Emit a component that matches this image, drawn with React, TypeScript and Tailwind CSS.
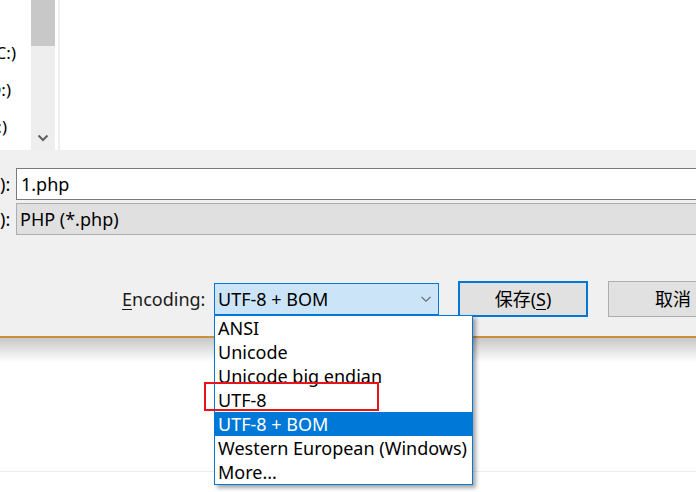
import React from "react";

const font = { fontFamily: '"Noto Sans", "Noto Sans CJK SC", sans-serif' };

const encodings = [
  "ANSI",
  "Unicode",
  "Unicode big endian",
  "UTF-8",
  "UTF-8 + BOM",
  "Western European (Windows)",
  "More...",
];

function NavList() {
  // drive labels are cut by the left edge of the window, as in the shot
  const drives = [
    { label: "本地磁盘 (C:)", pr: "pr-[15px]", top: "mt-[42px]" },
    { label: "新加卷 (D:)", pr: "pr-[20px]", top: "mt-[15px]" },
    { label: "新加卷 (E:)", pr: "pr-[24px]", top: "mt-[15px]" },
  ];
  return (
    <div className="flex h-[150px] shrink-0">
      <div className="w-[31px] overflow-hidden bg-white flex flex-col items-end">
        {drives.map((d) => (
          <div key={d.label} className={`${d.pr} ${d.top} whitespace-nowrap text-[17px] leading-[22px] text-black`}>
            {d.label}
          </div>
        ))}
      </div>
      <div className="w-[24px] bg-[#eeeeee] flex flex-col justify-between">
        <div className="h-[46px] bg-[#c8c8c8]" />
        <div className="flex justify-center pb-[8px]">
          <svg width="12" height="8" viewBox="0 0 12 8">
            <path d="M1.5 1.5 L6 6 L10.5 1.5" fill="none" stroke="#606060" strokeWidth="2" />
          </svg>
        </div>
      </div>
      <div className="w-[3px] bg-white" />
      <div className="w-[2px] bg-[#eeeeee]" />
      <div className="flex-1 bg-white" />
    </div>
  );
}

export default function App() {
  return (
    <div className="relative w-[696px] h-[492px] overflow-hidden bg-white" style={font}>
      <div className="flex flex-col">
        <NavList />
        <div className="bg-[#f0f0f0] h-[186px] flex flex-col pt-[18px]">
          <div className="flex items-center h-[32px]">
            <span className="w-[16px] text-right pr-[6px] text-[18px] leading-none">):</span>
            <div className="flex-1 h-[32px] border border-[#7a7a7a] bg-white flex items-center pl-[4px] text-[18px] text-black -mr-[4px]">
              1.php
            </div>
          </div>
          <div className="flex items-center h-[32px] mt-[3px]">
            <span className="w-[16px] text-right pr-[6px] text-[18px] leading-none">):</span>
            <div className="flex-1 h-[32px] border border-[#adadad] bg-[#e0e0e0] flex items-center pl-[3px] text-[18px] text-black -mr-[4px]">
              PHP (*.php)
            </div>
          </div>
          <div className="flex items-center mt-[46px] h-[36px]">
            <span className="ml-[122px] w-[92px] shrink-0 text-[18px] text-[#1a1a1a]">
              <span className="underline underline-offset-[3px]">E</span>ncoding:
            </span>
            <div className="w-[225px] shrink-0 h-[32px] border border-[#0078d7] bg-[#cce4f7] flex items-center justify-between pl-[3px] pr-[6px] text-[18px] text-black">
              <span>UTF-8 + BOM</span>
              <svg width="12" height="8" viewBox="0 0 12 8">
                <path d="M1.5 2 L6 6.2 L10.5 2" fill="none" stroke="#707070" strokeWidth="1.2" />
              </svg>
            </div>
            <button className="ml-[19px] shrink-0 w-[130px] h-[36px] border-2 border-[#0078d7] bg-[#e1e1e1] text-[18px] text-black">
              保存(<span className="underline underline-offset-[3px]">S</span>)
            </button>
            <button className="ml-[20px] shrink-0 w-[130px] h-[36px] border border-[#adadad] bg-[#e1e1e1] text-[18px] text-black text-left pl-[46px]">
              取消
            </button>
          </div>
        </div>
        <div className="h-[2px] bg-[#c8913e]" />
        <div className="h-[24px] bg-gradient-to-b from-[#c8c8c8] to-white" />
        <div className="h-[109px] bg-white" />
        <div className="h-[1px] bg-[#ebebeb]" />
      </div>

      <div className="absolute left-[214px] top-[315px] w-[259px] border border-[#0078d7] bg-white shadow-[3px_3px_4px_rgba(0,0,0,0.35)]">
        {encodings.map((e) => (
          <div
            key={e}
            className={`h-[24px] pl-[3px] flex items-center text-[18px] whitespace-nowrap ${
              e === "UTF-8 + BOM" ? "bg-[#0078d7] text-white" : "text-black"
            }`}
          >
            {e}
          </div>
        ))}
      </div>

      <div className="absolute left-[204px] top-[382px] w-[175px] h-[29px] border-2 border-[#e8141a]" />
    </div>
  );
}
